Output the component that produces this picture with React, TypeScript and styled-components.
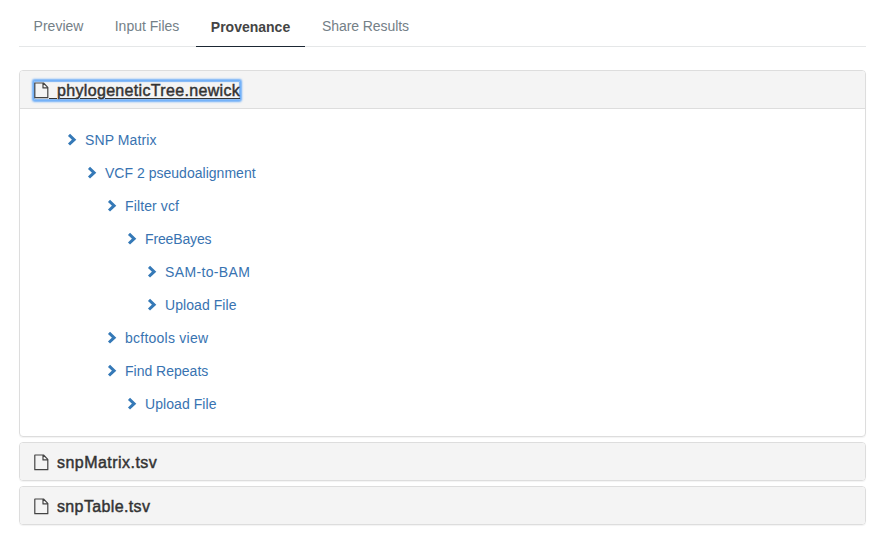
import React from "react";
import styled, { createGlobalStyle } from "styled-components";

const GlobalStyle = createGlobalStyle`
  * { box-sizing: border-box; }
  body { margin: 0; background: #fff; font-family: "Liberation Sans", Arial, sans-serif; font-size: 14px; overflow: hidden; }
`;
const Page = styled.main`padding: 7px 9px 0 19px; height: 537px;`;
const Tabs = styled.nav`display: flex; height: 40px; border-bottom: 1px solid #e5e7e8;`;
const Tab = styled.a<{ $width: number; $active?: boolean; $tracking?: number }>`
  width: ${(p) => p.$width}px; height: 40px; flex: none; text-align: center; white-space: nowrap;
  line-height: ${(p) => (p.$active ? 41 : 39)}px;
  letter-spacing: ${(p) => p.$tracking ?? 0}px;
  color: ${(p) => (p.$active ? "#444" : "#748087")};
  font-weight: ${(p) => (p.$active ? 700 : 400)};
  border-bottom: 1px solid ${(p) => (p.$active ? "#1b2733" : "transparent")};
`;
const Group = styled.section`display: flex; flex-direction: column; gap: 5px; margin-top: 23px;`;
const Panel = styled.article`border: 1px solid #ddd; border-radius: 4px; box-shadow: 0 1px 1px rgba(0,0,0,.05); overflow: hidden;`;
const Heading = styled.header`height: 37px; display: flex; align-items: center; padding: 1px 0 0 14px; background: #f4f4f4;`;
const Title = styled.a<{ $focus?: boolean; $tracking: number }>`
  display: block; height: 19px; line-height: 20px; white-space: pre; border-radius: 1px;
  font-size: 16px; color: #333; -webkit-text-stroke: 0.45px #333;
  letter-spacing: ${(p) => p.$tracking}px;
  text-decoration: ${(p) => (p.$focus ? "underline" : "none")};
  text-decoration-thickness: 1px;
  text-underline-offset: 2px;
  box-shadow: ${(p) => (p.$focus ? "0 0 2px 1.5px #6eaef8, inset 0 0 1px 1px #7fb5f5" : "none")};
`;
const FileSvg = styled.svg`width: 15px; height: 17px; vertical-align: -3px;`;
const Gap = styled.span`letter-spacing: 3.55px;`;
const Body = styled.div`height: 328px; border-top: 1px solid #ddd; padding-top: 14px;`;
const Row = styled.div<{ $level: number; $tracking: number }>`
  height: 33px; display: flex; align-items: center; gap: 8px; padding-left: ${(p) => 47 + p.$level * 20}px;
  color: #3873b1; letter-spacing: ${(p) => p.$tracking}px;
`;
const Chevron = styled.svg`width: 10px; height: 13px; flex: none;`;

const FileIcon = () => (
  <FileSvg viewBox="0 0 15 17" fill="none" stroke="#444" strokeWidth="1.2" strokeLinejoin="round">
    <path d="M1.2 1h8.3l4.3 4.3v10.4H.8V1.3zM9 1v4.9h4.8" />
  </FileSvg>
);
const FileTitle = ({ name, tracking, focus }: { name: string; tracking: number; focus?: boolean }) => (
  <Title $tracking={tracking} $focus={focus}><FileIcon /><Gap>{" "}</Gap>{name}</Title>
);
const steps: [string, number, number][] = [
  ["SNP Matrix", 0, 0.1], ["VCF 2 pseudoalignment", 1, 0.02], ["Filter vcf", 2, 0.12], ["FreeBayes", 3, -0.14],
  ["SAM-to-BAM", 4, 0.36], ["Upload File", 4, 0.06], ["bcftools view", 2, 0.24], ["Find Repeats", 2, 0], ["Upload File", 3, 0.06],
];

export default function App() {
  return (
    <Page>
      <GlobalStyle />
      <Tabs>
        <Tab $width={79}>Preview</Tab>
        <Tab $width={98}>Input Files</Tab>
        <Tab $width={109} $active>Provenance</Tab>
        <Tab $width={121} $tracking={-0.08}>Share Results</Tab>
      </Tabs>
      <Group>
        <Panel>
          <Heading><FileTitle name="phylogeneticTree.newick" tracking={0.33} focus /></Heading>
          <Body>
            {steps.map(([name, level, tracking], i) => (
              <Row key={i} $level={level} $tracking={tracking}>
                <Chevron viewBox="0 0 10 13"><path d="M2 1.9L7.1 6.7L2 11.5" fill="none" stroke="#3579b7" strokeWidth="3" /></Chevron>
                {name}
              </Row>
            ))}
          </Body>
        </Panel>
        <Panel><Heading><FileTitle name="snpMatrix.tsv" tracking={0.46} /></Heading></Panel>
        <Panel><Heading><FileTitle name="snpTable.tsv" tracking={0.36} /></Heading></Panel>
      </Group>
    </Page>
  );
}
